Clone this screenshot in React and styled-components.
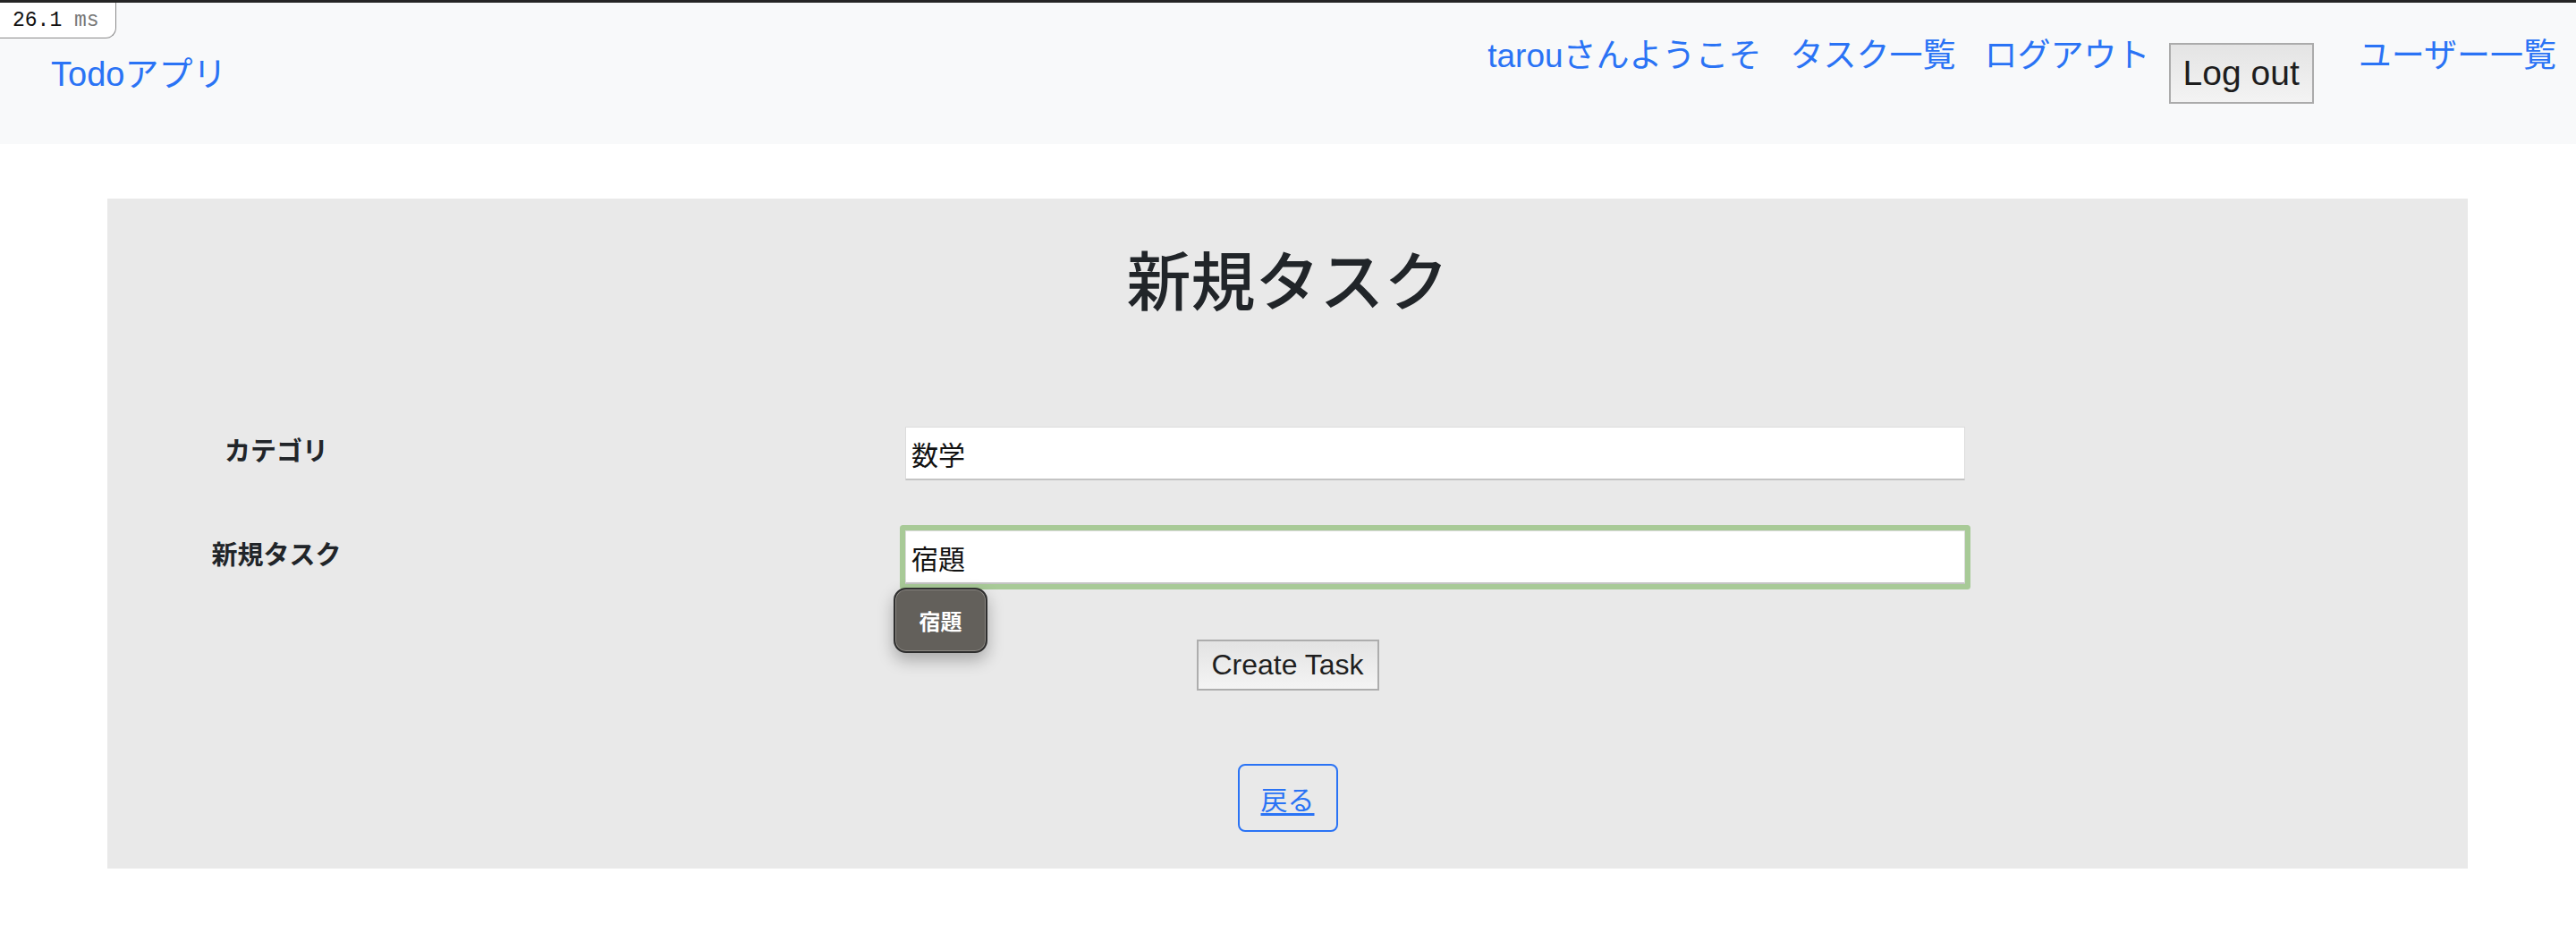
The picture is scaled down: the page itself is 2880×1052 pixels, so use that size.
import styled, { createGlobalStyle } from "styled-components";

const GlobalStyle = createGlobalStyle`
  html, body {
    margin: 0;
    padding: 0;
    background: #fff;
    font-family: "Liberation Sans", "Noto Sans CJK JP", sans-serif;
    color: #212529;
  }
  * {
    box-sizing: border-box;
  }
`;

const TopStrip = styled.div`
  height: 3px;
  background: #252525;
`;

const TimingBadge = styled.div`
  position: absolute;
  top: 3px;
  left: 0;
  width: 130px;
  height: 40px;
  padding-left: 14px;
  background: #fff;
  border-right: 1px solid #8a8a8a;
  border-bottom: 1px solid #8a8a8a;
  border-bottom-right-radius: 12px;
  font-family: "Liberation Mono", monospace;
  font-size: 23px;
  line-height: 40px;
  color: #111;
  white-space: pre;
`;

const Unit = styled.span`
  color: #777;
`;

const Navbar = styled.nav`
  display: flex;
  justify-content: space-between;
  align-items: flex-start;
  height: 158px;
  padding: 0 6px 0 57px;
  background: #f8f9fa;
`;

const Brand = styled.a`
  margin-top: 51px;
  font-size: 38px;
  line-height: 58px;
  color: #2a73f5;
  text-decoration: none;
`;

const NavList = styled.div`
  display: flex;
  align-items: flex-start;
`;

const NavLink = styled.a`
  margin-top: 33px;
  padding: 0 16px;
  font-size: 37px;
  line-height: 54px;
  color: #2a73f5;
  text-decoration: none;
  white-space: nowrap;
`;

const LogoutButton = styled.button`
  margin: 45px 34px 0 5px;
  height: 68px;
  padding: 0 14px;
  border: 2px solid #ababab;
  background: linear-gradient(#e4e4e4, #f3f3f3);
  font-family: "Liberation Sans", sans-serif;
  font-size: 39px;
  color: #1d1d1d;
  white-space: nowrap;
`;

const Card = styled.main`
  margin: 61px 121px 0 120px;
  padding: 51px 0 41px;
  background: #e9e9e9;
  display: flex;
  flex-direction: column;
  align-items: center;
`;

const Heading = styled.h1`
  margin: 0 0 118px;
  font-size: 72px;
  font-weight: 500;
  line-height: 86px;
  color: #212529;
`;

const FormRow = styled.div`
  align-self: stretch;
  display: grid;
  grid-template-columns: 378px 1185px;
  column-gap: 514px;
  align-items: start;
  margin-bottom: ${(p) => p.$gap}px;
`;

const Label = styled.label`
  padding-top: 3px;
  text-align: center;
  font-size: 29px;
  font-weight: 700;
  line-height: 50px;
  color: #212529;
`;

const Field = styled.div`
  position: relative;
`;

const TextInput = styled.input`
  display: block;
  width: 100%;
  height: 60px;
  padding: 0 6px;
  border: 1px solid #dcdcdc;
  border-bottom: 2px solid #c4c4c4;
  border-radius: 1px;
  background: #fff;
  font-family: "Liberation Sans", "Noto Sans CJK JP", sans-serif;
  font-size: 30px;
  color: #111;
  outline: none;
  box-shadow: ${(p) => (p.$focused ? "0 0 0 6px #a8ca97" : "none")};
`;

const Suggestion = styled.div`
  position: absolute;
  top: calc(100% + 4px);
  left: -13px;
  width: 105px;
  height: 73px;
  display: flex;
  align-items: center;
  justify-content: center;
  background: #63605b;
  border: 2px solid #2f2f2f;
  border-radius: 14px;
  box-shadow: inset 0 0 0 1px #8a8782, 0 8px 18px rgba(0, 0, 0, 0.28);
  color: #fff;
  font-size: 24px;
  font-weight: 700;
`;

const SubmitButton = styled.button`
  margin-top: 62px;
  width: 204px;
  height: 57px;
  padding: 0;
  border: 2px solid #adadad;
  background: linear-gradient(#e3e3e3, #f4f4f4);
  font-family: "Liberation Sans", sans-serif;
  font-size: 32px;
  color: #1f1f1f;
`;

const BackLink = styled.a`
  margin-top: 82px;
  height: 76px;
  padding: 0 24px;
  display: inline-flex;
  align-items: center;
  border: 2px solid #2a73f5;
  border-radius: 8px;
  font-size: 30px;
  color: #2a73f5;
  text-decoration: underline;
  text-underline-offset: 4px;
`;

export default function App() {
  return (
    <>
      <GlobalStyle />
      <TopStrip />
      <TimingBadge>
        26.1 <Unit>ms</Unit>
      </TimingBadge>
      <Navbar>
        <Brand href="#">Todoアプリ</Brand>
        <NavList>
          <NavLink href="#">tarouさんようこそ</NavLink>
          <NavLink href="#">タスク一覧</NavLink>
          <NavLink href="#">ログアウト</NavLink>
          <LogoutButton>Log out</LogoutButton>
          <NavLink href="#">ユーザー一覧</NavLink>
        </NavList>
      </Navbar>
      <Card>
        <Heading>新規タスク</Heading>
        <FormRow $gap={56}>
          <Label>カテゴリ</Label>
          <Field>
            <TextInput defaultValue="数学" />
          </Field>
        </FormRow>
        <FormRow $gap={0}>
          <Label>新規タスク</Label>
          <Field>
            <TextInput defaultValue="宿題" $focused />
            <Suggestion>宿題</Suggestion>
          </Field>
        </FormRow>
        <SubmitButton>Create Task</SubmitButton>
        <BackLink href="#">戻る</BackLink>
      </Card>
    </>
  );
}
